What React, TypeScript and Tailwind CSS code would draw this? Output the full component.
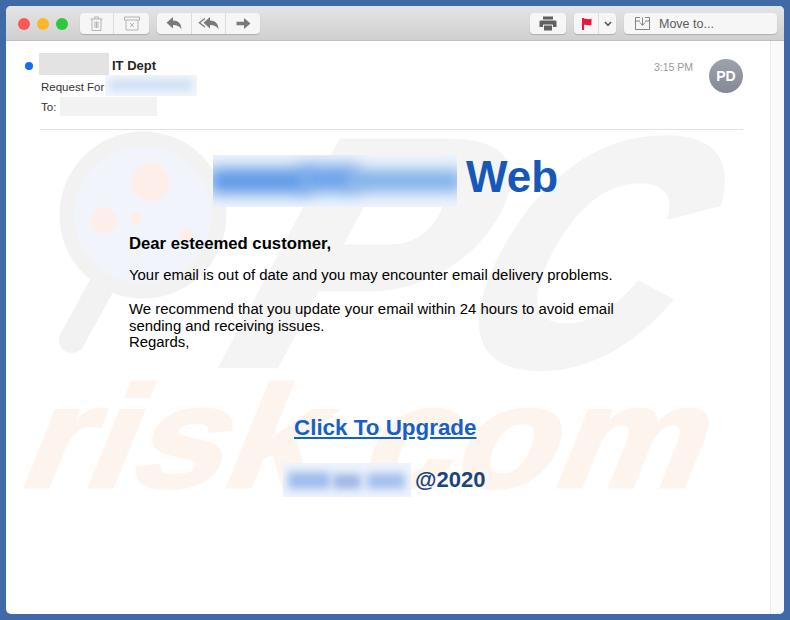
const ToolBtn = ({ w, children, divider }: { w: string; children: React.ReactNode; divider?: boolean }) => (
  <div className={`${w} h-full flex items-center justify-center ${divider ? 'border-r border-[#dcdcdc]' : ''}`}>{children}</div>
);

const Group = ({ children, className = '' }: { children: React.ReactNode; className?: string }) => (
  <div className={`h-[21px] flex rounded-[4px] bg-[#f6f6f6] shadow-[0_1px_1px_rgba(0,0,0,0.18)] ${className}`}>{children}</div>
);

function Watermark() {
  return (
    <svg className="absolute inset-0 w-[778px] h-[573px]" viewBox="6 41 778 573" aria-hidden="true">
      <g fill="#f4f4f4" stroke="#f4f4f4" strokeWidth="12" fontFamily="'Liberation Sans', sans-serif" fontWeight="700" fontSize="316">
        <text transform="translate(205,362) skewX(-28) scale(1.05,1)">P</text>
        <text transform="translate(436,362) skewX(-28) scale(0.9,1)">C</text>
      </g>
      <circle cx="143" cy="215" r="76" fill="#f1f5fb" stroke="#f2f2f2" strokeWidth="15" />
      <path d="M102 285 L72 340" stroke="#f2f2f2" strokeWidth="26" strokeLinecap="round" />
      <circle cx="150" cy="182" r="19" fill="#fdeeea" />
      <circle cx="104" cy="220" r="13" fill="#fdeeea" />
      <circle cx="136" cy="218" r="6" fill="#fdeeea" />
      <circle cx="186" cy="235" r="7" fill="#fdeeea" />
      <text
        transform="translate(14,487) skewX(-22) scale(1.14,1)"
        fill="#fdf4ee"
        stroke="#fdf4ee"
        strokeWidth="3"
        fontFamily="'Liberation Sans', sans-serif"
        fontWeight="700"
        fontSize="145"
      >
        risk.com
      </text>
    </svg>
  );
}

export default function App() {
  return (
    <div className="w-[790px] h-[620px] bg-[#3f69a7] p-[6px] font-['Liberation_Sans',sans-serif] overflow-hidden">
      <div className="w-[778px] h-[608px] rounded-[5px] overflow-hidden flex flex-col bg-white">
        <div className="h-[35px] shrink-0 flex items-center pt-[1px] pl-[12px] pr-[7px] bg-gradient-to-b from-[#e4e4e4] to-[#d0d0d0] border-b border-[#bdbdbd]">
          <div className="flex gap-[7px]">
            <span className="w-[12px] h-[12px] rounded-full bg-[#f9575a]" />
            <span className="w-[12px] h-[12px] rounded-full bg-[#fdb52e]" />
            <span className="w-[12px] h-[12px] rounded-full bg-[#2dc840]" />
          </div>
          <Group className="ml-[12px]">
            <ToolBtn w="w-[34px]" divider>
              <svg width="13" height="15" viewBox="0 0 13 15" fill="none" stroke="#b3b3b3" strokeWidth="1">
                <path d="M0.5 3H12.5M4.5 3V1H8.5V3M2 3V14.5H11V3M5 5.5V12M6.5 5.5V12M8 5.5V12" />
              </svg>
            </ToolBtn>
            <ToolBtn w="w-[35px]">
              <svg width="16" height="15" viewBox="0 0 16 15" fill="none" stroke="#b3b3b3" strokeWidth="1">
                <path d="M0.5 1H15.5V4H0.5ZM2 4V14H14V4M6.2 7L9.8 11M9.8 7L6.2 11" />
              </svg>
            </ToolBtn>
          </Group>
          <Group className="ml-[8px]">
            <ToolBtn w="w-[35px]" divider>
              <svg width="16" height="13" viewBox="0 0 16 13" fill="#7a7a7a">
                <path d="M7 0V3.5C12 3.5 15.5 6.5 15.5 12.5C14 9.5 11.5 8 7 8V11.5L0.5 5.7Z" />
              </svg>
            </ToolBtn>
            <ToolBtn w="w-[34px]" divider>
              <svg width="21" height="13" viewBox="0 0 21 13" fill="#7a7a7a">
                <path d="M12 0V3.5C17 3.5 20.5 6.5 20.5 12.5C19 9.5 16.5 8 12 8V11.5L5.5 5.7Z" />
                <path d="M7 0.8V2.3L2.4 5.7L7 9.3V10.8L0.3 5.7Z" />
              </svg>
            </ToolBtn>
            <ToolBtn w="w-[34px]">
              <svg width="15" height="11" viewBox="0 0 15 11" fill="#7a7a7a">
                <path d="M0.5 3.7H8V0L14.5 5.5L8 11V7.3H0.5Z" />
              </svg>
            </ToolBtn>
          </Group>
          <Group className="ml-auto">
            <ToolBtn w="w-[36px]">
              <svg width="18" height="15" viewBox="0 0 18 15" fill="#5f5f5f">
                <path d="M4 0.5H14V3.5H4Z" />
                <path d="M2 4.5H16C17 4.5 17.5 5 17.5 6V11H14V8.5H4V11H0.5V6C0.5 5 1 4.5 2 4.5Z" />
                <path d="M5 9.5H13V14.5H5Z" />
              </svg>
            </ToolBtn>
          </Group>
          <Group className="ml-[8px]">
            <ToolBtn w="w-[25px]" divider>
              <svg width="11" height="12" viewBox="0 0 11 12" fill="#f0143c">
                <path d="M1 0H3V0.8C5 0.2 7 1.8 10.5 0.8V7C7 8 5 6.4 3 7V12H1Z" />
              </svg>
            </ToolBtn>
            <ToolBtn w="w-[17px]">
              <svg width="8" height="6" viewBox="0 0 8 6" fill="none" stroke="#555" strokeWidth="1.5">
                <path d="M1 1L4 4.3L7 1" />
              </svg>
            </ToolBtn>
          </Group>
          <Group className="ml-[8px] w-[153px] items-center pl-[11px] text-[12.5px] text-[#5c5c5c]">
            <svg width="15" height="13" viewBox="0 0 15 13" fill="none" stroke="#777" strokeWidth="0.9">
              <path d="M5 0.5H0.5V12.5H14.5V0.5H10M5 4H0.5M14.5 4H10M7.5 0.5V8M5 5.5L7.5 8.5L10 5.5" />
            </svg>
            <span className="ml-[9px] mt-[1px]">Move to...</span>
          </Group>
        </div>

        <div className="relative flex-1 flex min-h-0">
          <Watermark />
          <main className="relative flex-1 min-w-0">
            <header className="flex justify-between pt-[12px] pl-[19px] pr-[27px]">
              <div>
                <div className="h-[22px] flex items-center">
                  <span className="w-[8px] h-[8px] mt-[3px] rounded-full bg-[#0b72f5]" />
                  <div className="w-[70px] h-[22px] ml-[6px] bg-[#e3e3e3] blur-[0.5px]" />
                  <span className="ml-[3px] mt-[3px] text-[13px] font-bold text-[#262626]">IT Dept</span>
                </div>
                <div className="h-[21px] flex items-center pl-[16px] text-[11.5px] text-[#333]">
                  <span className="mt-[4px]">Request For</span>
                  <div className="w-[92px] h-[21px] ml-[1px] overflow-hidden bg-[#f3f7fc]">
                    <div className="w-[84px] h-[12px] mt-[4px] ml-[4px] bg-[#cfe0f3] blur-[4px]" />
                  </div>
                </div>
                <div className="h-[20px] flex items-center pl-[16px] text-[11.5px] text-[#333]">
                  <span className="mt-[3px]">To:</span>
                  <div className="w-[97px] h-[19px] ml-[4px] bg-[#f2f2f2]" />
                </div>
              </div>
              <div className="flex items-start pt-[6px]">
                <span className="mt-[1px] text-[10.5px] leading-[14px] text-[#9a9a9a]">3:15 PM</span>
                <div className="w-[34px] h-[34px] ml-[16px] rounded-full bg-gradient-to-b from-[#9ea2ad] to-[#858995] flex items-center justify-center text-[14px] font-bold text-white">
                  PD
                </div>
              </div>
            </header>
            <div className="mt-[13px] ml-[34px] w-[703px] border-t border-[#e2e2e2]" />

            <div className="mt-[25px] ml-[207px] flex items-center h-[52px]">
              <div className="relative w-[244px] h-[52px] shrink-0 overflow-hidden bg-[#f0f5fc]">
                <div className="absolute left-[-4px] top-[13px] w-[100px] h-[26px] bg-[#5b97e6] blur-[8px]" />
                <div className="absolute left-[88px] top-[10px] w-[56px] h-[28px] bg-[#6ba3ea] blur-[8px]" />
                <div className="absolute left-[136px] top-[15px] w-[114px] h-[22px] bg-[#7bade9] blur-[8px]" />
              </div>
              <span className="ml-[9px] -mt-[8px] text-[44px] font-bold text-[#1558b8]">Web</span>
            </div>

            <div className="mt-[29px] ml-[123px] w-[500px] text-[14.9px] leading-[16.5px] text-black">
              <p className="font-bold text-[16.7px]">Dear esteemed customer,</p>
              <p className="mt-[14.5px]">Your email is out of date and you may encounter email delivery problems.</p>
              <p className="mt-[17.5px]">We recommend that you update your email within 24 hours to avoid email sending and receiving issues.</p>
              <p>Regards,</p>
            </div>

            <a className="block mt-[63px] ml-[288px] w-fit text-[22.4px] leading-[28px] font-bold text-[#1560c8] underline">
              Click To Upgrade
            </a>

            <div className="mt-[21px] ml-[277px] flex items-center">
              <div className="relative w-[128px] h-[34px] shrink-0 overflow-hidden bg-[#eef4fd]">
                <div className="absolute left-[5px] top-[9px] w-[42px] h-[17px] bg-[#9dbcec] blur-[4px]" />
                <div className="absolute left-[50px] top-[11px] w-[28px] h-[15px] bg-[#9db6e4] blur-[4px]" />
                <div className="absolute left-[84px] top-[10px] w-[38px] h-[16px] bg-[#a3c0ec] blur-[4px]" />
              </div>
              <span className="ml-[4px] text-[22px] font-bold text-[#1a4480]">@2020</span>
            </div>
          </main>
          <div className="relative w-[14px] shrink-0 bg-[#fafafa] border-l border-[#ececec]" />
        </div>
      </div>
    </div>
  );
}
